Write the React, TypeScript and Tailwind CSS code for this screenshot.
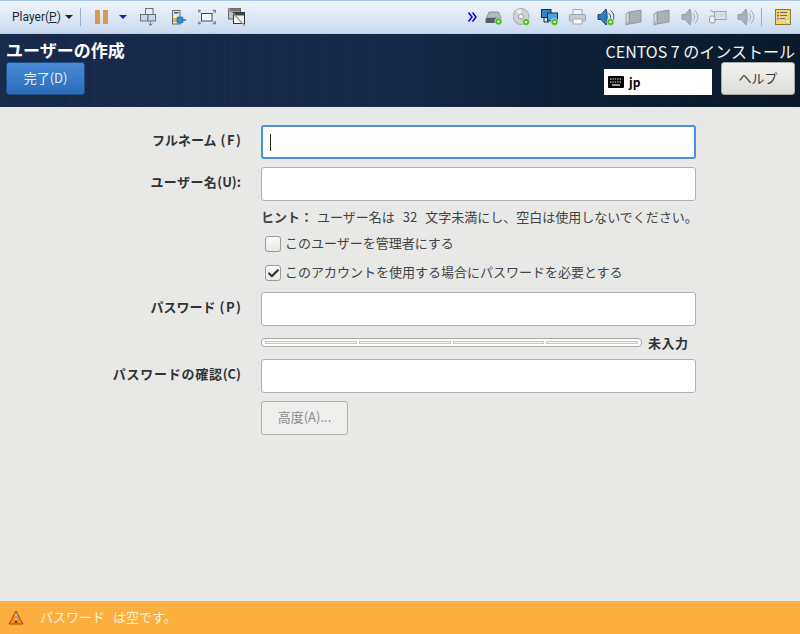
import { Check } from 'lucide-react';

const jpFont = "font-['Noto_Sans_CJK_JP','Noto_Sans',sans-serif]";

function Badge({ x = 13.5, y = 13.5 }: { x?: number; y?: number }) {
  return (
    <g>
      <circle cx={x} cy={y} r="3.6" fill="#4fb82e" stroke="#d8f0cc" strokeWidth="0.7" />
      <circle cx={x} cy={y} r="1.3" fill="#d8f5c8" />
    </g>
  );
}

function Icon({ children }: { children: React.ReactNode }) {
  return (
    <svg width="18" height="18" viewBox="0 0 18 18" className="block shrink-0">
      {children}
    </svg>
  );
}

const NetworkIcon = () => (
  <Icon>
    <rect x="5.5" y="0.5" width="7.5" height="6" fill="#e4ebf3" stroke="#6a7078" />
    <rect x="0.5" y="6.5" width="7.5" height="6.5" fill="#c8d8ea" stroke="#6a7078" />
    <rect x="8" y="6.5" width="7.5" height="6.5" fill="#c8d8ea" stroke="#6a7078" />
    <path d="M10.5 13v4.5M8.5 15.5l2 2 2-2" fill="none" stroke="#7a8088" />
  </Icon>
);
const PlugIcon = () => (
  <Icon>
    <rect x="3.5" y="2.5" width="7.5" height="13.5" fill="#e8e8e6" stroke="#6a6a6a" />
    <rect x="5" y="4" width="4.5" height="1.5" fill="#555" />
    <rect x="4" y="10" width="4" height="4" fill="#e2bc28" />
    <rect x="8" y="9" width="6" height="6" rx="1" fill="#2f8fd8" stroke="#1c5c98" strokeWidth="0.6" />
    <path d="M14 12h3" stroke="#2f6fa8" strokeWidth="1.4" />
  </Icon>
);
const FitIcon = () => (
  <Icon>
    <rect x="3.5" y="5.5" width="10.5" height="7.5" fill="#f2f6fb" stroke="#4a4a4a" />
    <path d="M-0.2 5V2.5h3M14.8 2.5h3V5M-0.2 13v2.5h3M14.8 15.5h3V13" fill="none" stroke="#7c7c7c" strokeWidth="1.4" />
    <path d="M0.5 3l2 2M17 3l-2 2M0.5 15l2-2M17 15l-2-2" stroke="#8c8c8c" />
  </Icon>
);
const WindowsOffIcon = () => (
  <Icon>
    <rect x="1.5" y="0.5" width="12" height="10.5" fill="#c4c4c4" stroke="#666" />
    <rect x="1.5" y="0.5" width="12" height="3" fill="#777" />
    <rect x="6.5" y="4.5" width="11" height="11" fill="#f6f6f6" stroke="#333" />
    <rect x="6.5" y="4.5" width="11" height="3" fill="#444" />
    <path d="M1 0l17 18" stroke="#9a9a9a" strokeWidth="1.5" />
  </Icon>
);
const HddIcon = () => (
  <Icon>
    <path d="M4 4h9.5l2.5 6H1.5z" fill="#b4bac2" stroke="#6a7078" strokeWidth="0.6" />
    <rect x="0.5" y="10" width="16" height="5" rx="1" fill="#545c66" />
    <Badge />
  </Icon>
);
const CdIcon = () => (
  <Icon>
    <circle cx="8" cy="8.5" r="8" fill="#cfd2d5" stroke="#a6a8aa" />
    <path d="M8 8.5L3 3a8 8 0 0 1 5-2z" fill="#eceef0" />
    <circle cx="8" cy="8.5" r="2.5" fill="#f4f4f4" stroke="#999" />
    <Badge x={13} y={14} />
  </Icon>
);
const MonitorsIcon = () => (
  <Icon>
    <rect x="0.5" y="1.5" width="9.5" height="8" fill="#2f88c8" stroke="#1c2c3c" />
    <rect x="6.5" y="5" width="10" height="8" fill="#45a4e0" stroke="#1c2c3c" />
    <path d="M3 9.5V14h5M11 13v2" fill="none" stroke="#1c2c3c" />
    <Badge x={13.5} y={14} />
  </Icon>
);
const PrinterIcon = () => (
  <Icon>
    <rect x="4" y="1.5" width="9" height="5" fill="#f2f2f2" stroke="#a8acb0" />
    <rect x="0.5" y="6.5" width="16" height="6.5" rx="1" fill="#c8ccd0" stroke="#a0a4a8" />
    <rect x="4" y="11" width="9" height="5" fill="#f8f8f8" stroke="#a8acb0" />
  </Icon>
);
const SoundIcon = ({ active }: { active?: boolean }) => (
  <Icon>
    <path
      d="M1 6.5h3l5-5.5c1.5 2 1.5 14 0 16l-5-5.5H1z"
      fill={active ? '#2d7cc4' : '#a8b0b8'}
      stroke={active ? '#16283c' : '#8c949c'}
      strokeWidth="0.8"
    />
    <path
      d="M11.5 5a5 5 0 0 1 0 8M13.5 2.5a8 8 0 0 1 0 13"
      fill="none"
      stroke={active ? '#4a5260' : '#a4aab0'}
    />
    {active && <Badge y={14} />}
  </Icon>
);
const DriveIcon = () => (
  <Icon>
    <path d="M4 4l12-2v12L4 16z" fill="#aab0b6" stroke="#878d93" strokeWidth="0.8" />
    <path d="M1 6l3-2v12l-3 1z" fill="#dcdee0" stroke="#8c9094" strokeWidth="0.8" />
    <rect x="1.8" y="14" width="1" height="1.5" fill="#5cb040" />
  </Icon>
);
const KeyboardUsbIcon = () => (
  <Icon>
    <path d="M1 2l4 2.5" stroke="#999" />
    <rect x="5.5" y="3.5" width="11.5" height="8" fill="#e2e4e6" stroke="#a0a4a8" />
    <path d="M7 6h8.5M7 8h8.5" stroke="#b4b8bc" strokeDasharray="1 1" />
    <rect x="0.5" y="8" width="5.5" height="7" rx="2" fill="#eee" stroke="#989ca0" />
  </Icon>
);
const NoteIcon = () => (
  <Icon>
    <rect x="1.5" y="1.5" width="15" height="15" fill="#ecd968" stroke="#8a7a30" />
    <rect x="3" y="4" width="2" height="1.5" fill="#d84c4c" />
    <path d="M6 4.5h7" stroke="#6a6a8a" />
    <rect x="3" y="7" width="2" height="1.5" fill="#4c70d8" />
    <path d="M6 7.5h7" stroke="#6a6a8a" />
    <rect x="3" y="10" width="2" height="1.5" fill="#d84cb0" />
    <path d="M6 10.5h5" stroke="#6a6a8a" />
    <path d="M12 16.5l4.5-4.5h-4.5z" fill="#f6f6f0" stroke="#999" strokeWidth="0.5" />
  </Icon>
);

function Toolbar() {
  const rightIcons = [
    <HddIcon />,
    <CdIcon />,
    <MonitorsIcon />,
    <PrinterIcon />,
    <SoundIcon active />,
    <DriveIcon />,
    <DriveIcon />,
    <SoundIcon />,
    <KeyboardUsbIcon />,
    <SoundIcon />,
  ];
  return (
    <div className="h-[34px] flex items-center pl-[12px] pr-[8px] border-t border-[#a6c8ea] border-b-[#b9cde4] border-b bg-[linear-gradient(#f0f5fb,#c9daee)]">
      <span className="text-[12px] text-[#1c2a3a] font-['Roboto',sans-serif] w-[53px]">
        Player(<span className="underline">P</span>)
      </span>
      <span className="w-0 h-0 border-x-[4px] border-x-transparent border-t-[4px] border-t-[#222]" />
      <span className="w-px h-[18px] bg-[#8fb0d0] ml-[7px] mr-[14px]" />
      <span className="flex gap-[3px]">
        <span className="w-[5px] h-[14px] bg-[#d99850] block" />
        <span className="w-[5px] h-[14px] bg-[#d99850] block" />
      </span>
      <span className="ml-[11px] mr-[13px] w-0 h-0 border-x-[4px] border-x-transparent border-t-[4px] border-t-[#1a1ac0]" />
      <div className="flex gap-[11px]">
        <NetworkIcon />
        <PlugIcon />
        <FitIcon />
        <WindowsOffIcon />
      </div>
      <svg width="17" height="10" viewBox="0 0 17 10" className="block ml-auto">
        <path d="M0.5 0.5L4 5 0.5 9.5M4.5 0.5L8 5 4.5 9.5" fill="none" stroke="#0a0ae0" strokeWidth="1.6" />
      </svg>
      <div className="flex gap-[10px]">{rightIcons.map((icon, i) => <span key={i}>{icon}</span>)}</div>
      <span className="w-px h-[18px] bg-[#8fb0d0] ml-[6px] mr-[12px]" />
      <NoteIcon />
    </div>
  );
}

function Header() {
  return (
    <div className="h-[73px] flex justify-between text-white bg-[repeating-linear-gradient(90deg,rgba(255,255,255,0.008)_0px,rgba(255,255,255,0)_11px,rgba(0,0,0,0.02)_23px),linear-gradient(90deg,#182a4c_0%,#15284a_50%,#0d1f35_72%,#0a1a2a_100%)] pl-[6px] pr-[5px]">
      <div>
        <div className="text-[17px] font-bold leading-[22px] mt-[5px]">ユーザーの作成</div>
        <button className="mt-[1px] block w-[79px] h-[33px] pb-[2px] rounded-[3px] border border-[#1f4e86] bg-[linear-gradient(#4a8ad6,#2a6cb8)] text-[13px] text-[#e8f0fa]">
          完了(D)
        </button>
      </div>
      <div className="flex flex-col items-end">
        <div className="text-[16px] leading-[20px] mt-[7px] text-[#f0f2f4]">CENTOS 7 のインストール</div>
        <div className="flex items-start gap-[9px] mt-[1px]">
          <div className="mt-[7px] w-[108px] h-[26px] bg-white flex items-center pl-[4px] gap-[5px] text-black text-[12px] font-bold">
            <svg width="16" height="12" viewBox="0 0 16 12" className="block">
              <rect width="16" height="12" rx="1" fill="#000" />
              <path d="M2 3h12M2 6h12" stroke="#fff" strokeWidth="1.2" strokeDasharray="1.4 1" />
              <path d="M4 9h8" stroke="#fff" strokeWidth="1.2" />
            </svg>
            jp
          </div>
          <button className="w-[74px] h-[33px] pb-[2px] rounded-[3px] border border-[#a8a8a4] bg-[linear-gradient(#f2f2f0,#dcdcd8)] text-[13px] text-[#3a3a3a]">
            ヘルプ
          </button>
        </div>
      </div>
    </div>
  );
}

function Label({ children }: { children: React.ReactNode }) {
  return <div className="text-right text-[13px] font-bold text-[#2e3436] self-center pb-[4px] whitespace-nowrap">{children}</div>;
}

function Field({ focused }: { focused?: boolean }) {
  return focused ? (
    <div className="h-[34px] rounded-[3px] bg-white border-2 border-[#4a90d9] flex items-center pl-[7px]">
      <span className="w-px h-[17px] bg-[#222] block" />
    </div>
  ) : (
    <div className="h-[34px] rounded-[3px] bg-white border border-[#b0b0ac]" />
  );
}

function CheckRow({ checked, text }: { checked?: boolean; text: string }) {
  return (
    <div className="flex items-center gap-[4px] pl-[4px] text-[13px] text-[#3f4446] h-[16px]">
      <span className="w-[16px] h-[16px] rounded-[3px] border border-[#9a9a98] bg-[linear-gradient(#fafafa,#e8e8e6)] flex items-center justify-center">
        {checked && <Check size={13} strokeWidth={4} className="text-[#2e3436]" />}
      </span>
      <span className="mb-[2px]">{text}</span>
    </div>
  );
}

function Form() {
  return (
    <div className="flex-1 bg-[#e8e8e6] pt-[18px]">
      <div className="grid grid-cols-[241px_435px] gap-x-[20px]">
        <Label>
          フルネーム<span className="ml-[4px] -mr-[1.5px] tracking-[1.5px]">(F)</span>
        </Label>
        <Field focused />
        <div className="col-start-2 h-[8px]" />
        <Label>
          <span className="tracking-[0.4px]">ユーザー名</span>(U):
        </Label>
        <Field />
        <div className="col-start-2 mt-[7px] text-[13px] leading-[18px] text-[#3f4446] whitespace-nowrap">
          <span className="font-bold mr-[4px]">ヒント：</span>ユーザー名は<span className="mx-[8px]">32</span>文字未満にし、空白は使用しないでください。
        </div>
        <div className="col-start-2 mt-[10px]">
          <CheckRow text="このユーザーを管理者にする" />
        </div>
        <div className="col-start-2 mt-[13px]">
          <CheckRow checked text="このアカウントを使用する場合にパスワードを必要とする" />
        </div>
        <div className="col-start-2 h-[11px]" />
        <Label>
          パスワード<span className="ml-[4px] -mr-[1.5px] tracking-[1.5px]">(P)</span>
        </Label>
        <Field />
        <div className="col-start-2 flex items-center mt-[8px] h-[17px]">
          <div className="w-[381px] h-[9px] rounded-[4px] border border-[#a8a8a4] bg-white flex gap-[2px] px-[3px] items-center">
            {[0, 1, 2, 3].map((i) => (
              <span key={i} className="flex-1 h-[3px] bg-[#f4f4f2] border border-[#c8c8c4]" />
            ))}
          </div>
          <span className="ml-[6px] text-[13px] tracking-[0.5px] font-bold text-[#2e3436]">未入力</span>
        </div>
        <div className="col-start-2 h-[8px]" />
        <Label>
          <span className="tracking-[0.75px]">パスワードの確認</span>(C)
        </Label>
        <Field />
        <div className="col-start-2 mt-[8px]">
          <button className="w-[87px] h-[34px] pb-[2px] rounded-[3px] border border-[#b0b0ac] bg-[#eeeeec] text-[13px] text-[#8a8c8c]">
            高度(A)...
          </button>
        </div>
      </div>
    </div>
  );
}

function Footer() {
  return (
    <div className="h-[33px] bg-[#fcaf3e] flex items-center pl-[8px] text-[13px] text-[#fdf2dc]">
      <svg width="16" height="15" viewBox="0 0 16 15" className="block">
        <path d="M8 1l7 13H1z" fill="#f08a24" stroke="#a04a10" strokeLinejoin="round" />
        <path d="M8 4.5v5" stroke="#fff" strokeWidth="2" />
        <path d="M8 5v4" stroke="#4a2000" strokeWidth="0.8" />
        <circle cx="8" cy="11.8" r="1" fill="#3a1a00" />
      </svg>
      <span className="ml-[16px] mb-[2px]">
        パスワード<span className="ml-[8px]">は空です。</span>
      </span>
    </div>
  );
}

export default function App() {
  return (
    <div className={`w-[800px] h-[634px] flex flex-col overflow-hidden ${jpFont}`}>
      <Toolbar />
      <Header />
      <Form />
      <Footer />
    </div>
  );
}
